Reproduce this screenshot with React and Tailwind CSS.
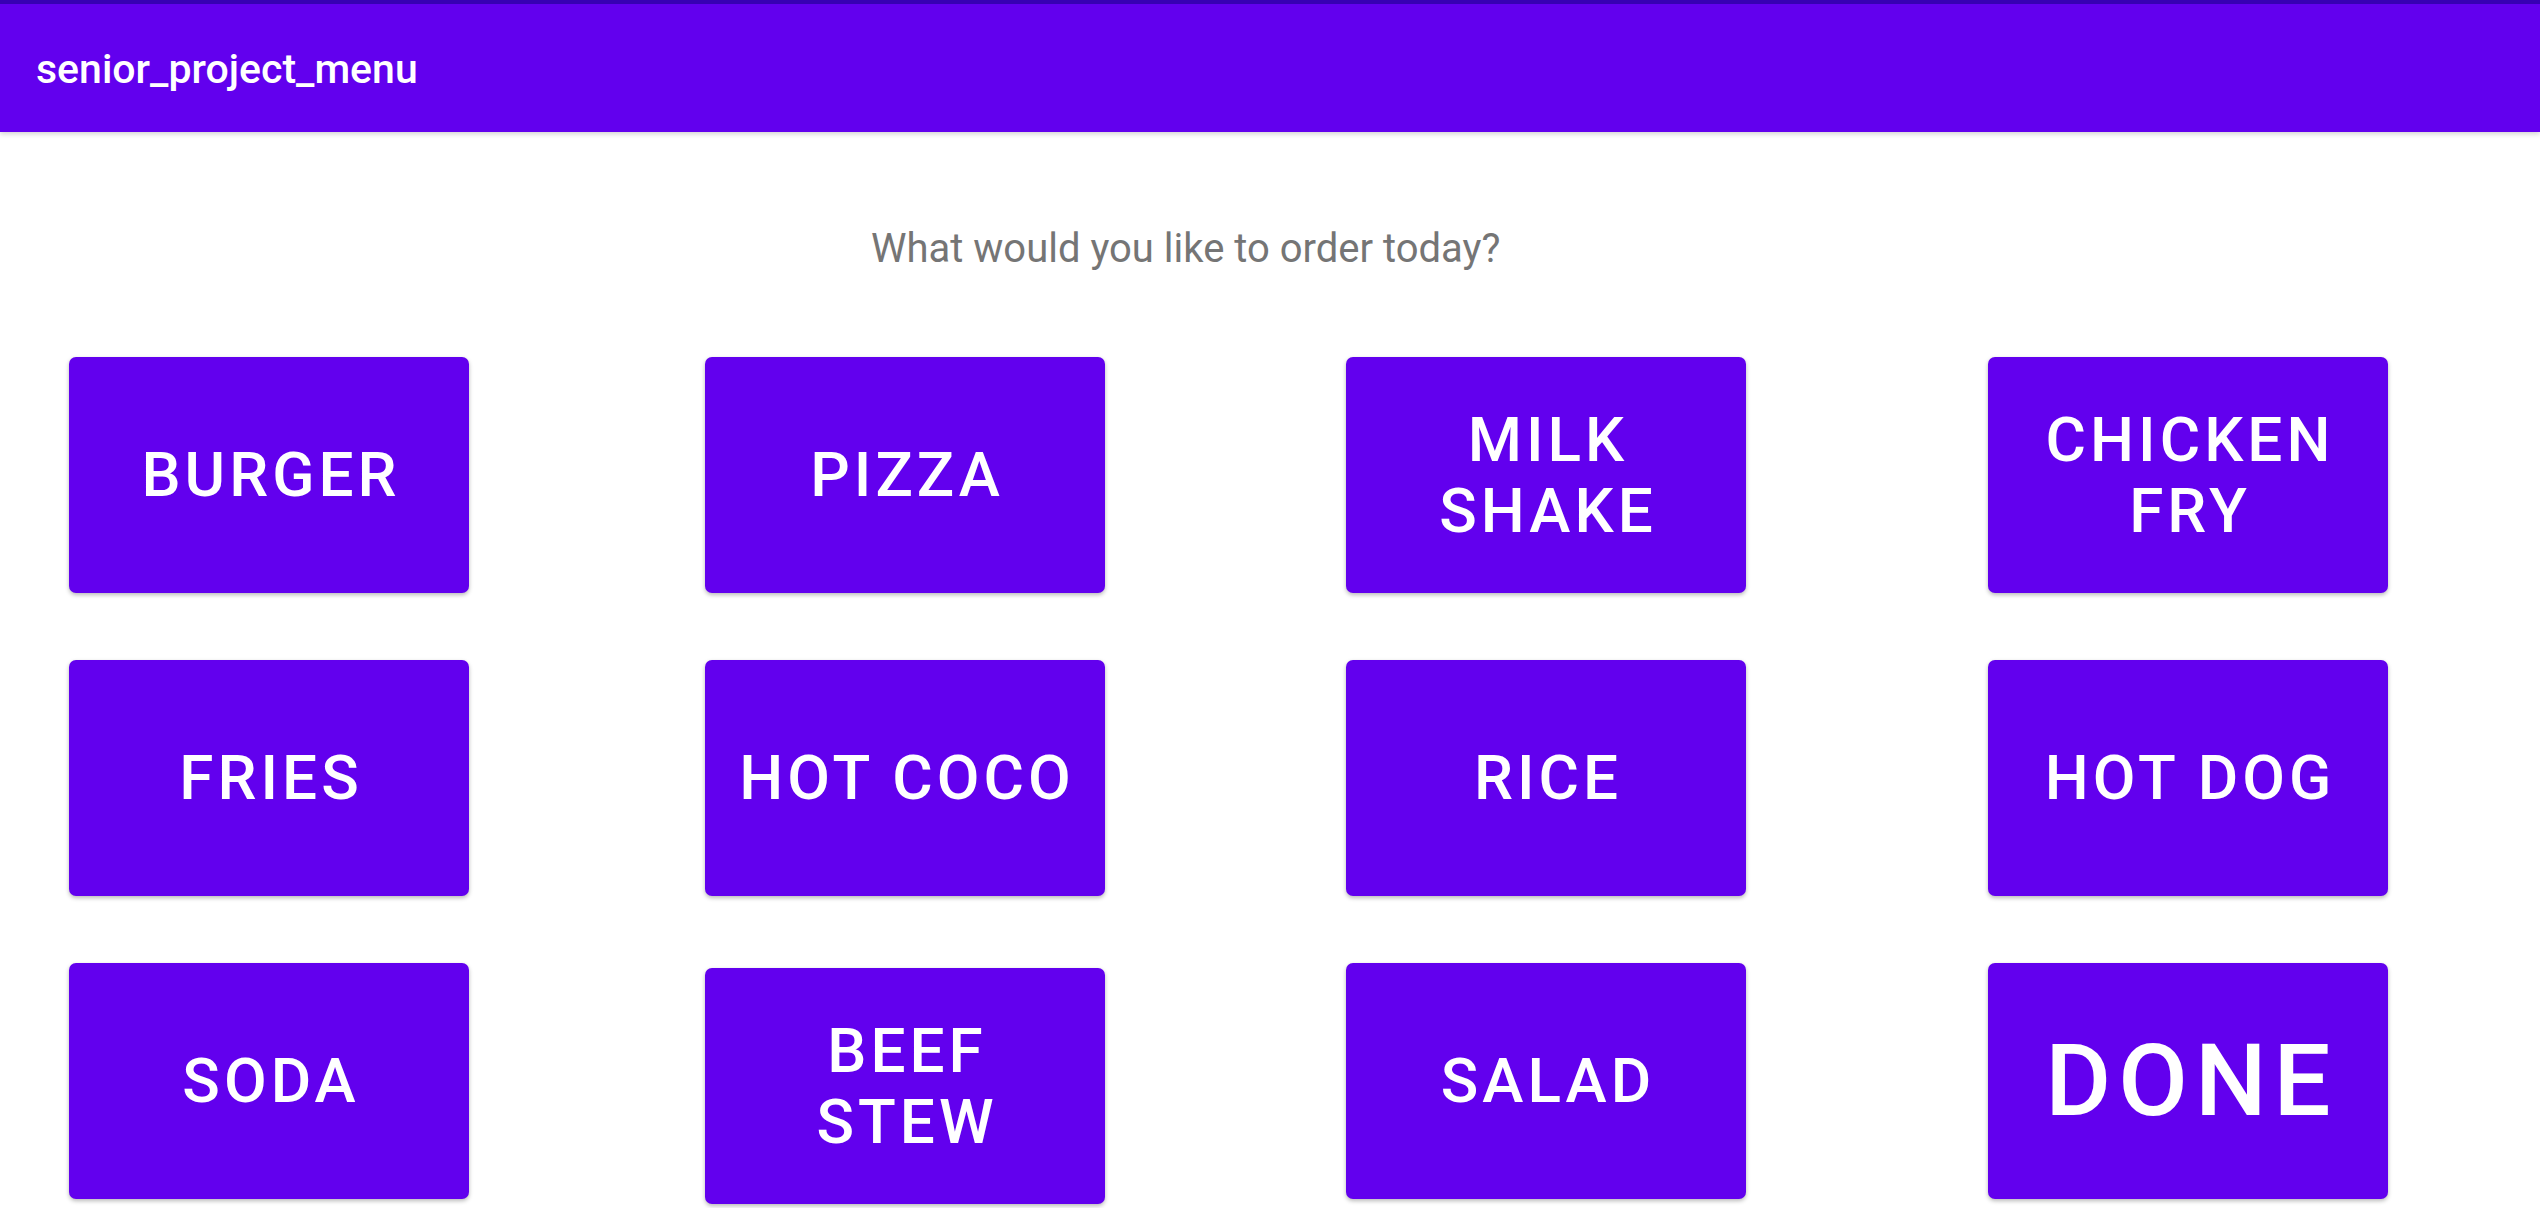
import React from 'react';

const items = [
  { label: ['BURGER'] },
  { label: ['PIZZA'] },
  { label: ['MILK', 'SHAKE'] },
  { label: ['CHICKEN', 'FRY'] },
  { label: ['FRIES'] },
  { label: ['HOT COCO'] },
  { label: ['RICE'] },
  { label: ['HOT DOG'] },
  { label: ['SODA'] },
  { label: ['BEEF', 'STEW'], shifted: true },
  { label: ['SALAD'] },
  { label: ['DONE'], big: true },
];

function MenuButton({ item }) {
  return (
    <button
      type="button"
      className={`flex h-[236px] w-[400px] flex-col items-center justify-center rounded-[7px] bg-[#6200ee] font-medium uppercase leading-[1.15] text-white shadow-[0_2px_4px_rgba(0,0,0,0.28)] ${
        item.big ? 'pl-[7px] text-[101px] tracking-[0.07em]' : 'pl-[4px] text-[62px] tracking-[0.065em]'
      } ${item.shifted ? 'mt-[5px]' : ''}`}
    >
      {item.label.map((line) => (
        <span key={line} className="block whitespace-nowrap">
          {line}
        </span>
      ))}
    </button>
  );
}

export default function App() {
  return (
    <div className="h-[1208px] w-[2540px] overflow-hidden bg-white font-['Roboto',sans-serif]">
      <header className="relative z-10 shadow-[0_2px_5px_rgba(0,0,0,0.18)]">
        <div className="h-[4px] bg-[#3700b3]" />
        <div className="flex h-[128px] items-center bg-[#6200ee] px-[36px] pt-[4px]">
          <h1 className="text-[41px] font-medium text-white">senior_project_menu</h1>
        </div>
      </header>

      <main className="px-[69px]">
        <p className="mt-[94px] pl-[802px] text-[40px] leading-[1.172] text-[#757575]">
          What would you like to order today?
        </p>

        <div className="mt-[84px] grid grid-cols-[636px_641px_642px_400px] grid-rows-[236px_236px_236px] items-start gap-y-[67px]">
          {items.map((item) => (
            <MenuButton key={item.label.join(' ')} item={item} />
          ))}
        </div>
      </main>
    </div>
  );
}
